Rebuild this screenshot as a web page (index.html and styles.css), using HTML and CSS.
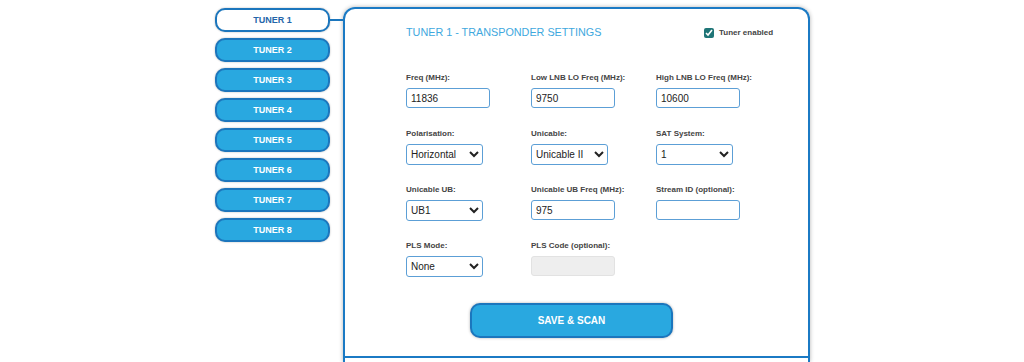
FILE: index.html
```html
<!DOCTYPE html>
<html lang="en">
<head>
<meta charset="utf-8">
<title>Tuner settings</title>
<link rel="stylesheet" href="styles.css">
</head>
<body>
<div class="page">
  <nav class="tuners">
    <button class="tuner active">TUNER 1</button>
    <button class="tuner">TUNER 2</button>
    <button class="tuner">TUNER 3</button>
    <button class="tuner">TUNER 4</button>
    <button class="tuner">TUNER 5</button>
    <button class="tuner">TUNER 6</button>
    <button class="tuner">TUNER 7</button>
    <button class="tuner">TUNER 8</button>
  </nav>
  <main class="panel">
    <section class="settings">
      <div class="head">
        <h2 class="title">TUNER 1 - TRANSPONDER SETTINGS</h2>
        <label class="enable"><input type="checkbox" checked> Tuner enabled</label>
      </div>
      <div class="fields">
        <div class="field"><label>Freq (MHz):</label><input class="text" type="text" value="11836"></div>
        <div class="field"><label>Low LNB LO Freq (MHz):</label><input class="text" type="text" value="9750"></div>
        <div class="field"><label>High LNB LO Freq (MHz):</label><input class="text" type="text" value="10600"></div>

        <div class="field"><label>Polarisation:</label><select class="sel"><option>Horizontal</option><option>Vertical</option></select></div>
        <div class="field"><label>Unicable:</label><select class="sel"><option>Unicable II</option><option>Unicable I</option></select></div>
        <div class="field"><label>SAT System:</label><select class="sel"><option>1</option><option>2</option></select></div>

        <div class="field"><label>Unicable UB:</label><select class="sel"><option>UB1</option><option>UB2</option></select></div>
        <div class="field"><label>Unicable UB Freq (MHz):</label><input class="text" type="text" value="975"></div>
        <div class="field"><label>Stream ID (optional):</label><input class="text" type="text" value=""></div>

        <div class="field"><label>PLS Mode:</label><select class="sel"><option>None</option><option>Root</option><option>Gold</option></select></div>
        <div class="field"><label>PLS Code (optional):</label><input class="text" type="text" value="" disabled></div>
      </div>
      <button class="save">SAVE &amp; SCAN</button>
    </section>
    <section class="next"></section>
  </main>
</div>
</body>
</html>
```

FILE: styles.css
```css
* { box-sizing: border-box; }

body {
  margin: 0;
  background: #fff;
  font-family: "Liberation Sans", Arial, sans-serif;
  color: #444;
}

.page {
  display: flex;
  align-items: flex-start;
  padding: 8px 0 0 215px;
}

.tuners {
  display: flex;
  flex-direction: column;
  gap: 6px;
  width: 115px;
}

.tuner {
  height: 24px;
  margin: 0;
  padding: 0;
  border: 2px solid #1b76bd;
  border-radius: 10px;
  background: #29a8e0;
  color: #fff;
  font-family: "Liberation Sans", Arial, sans-serif;
  font-weight: bold;
  font-size: 9px;
  box-shadow: 0 0 2px rgba(0, 0, 0, 0.3);
}

.tuner.active {
  position: relative;
  background: #fff;
  color: #2566aa;
}

.tuner.active::after {
  content: "";
  position: absolute;
  left: calc(100% + 2px);
  top: 50%;
  margin-top: -1px;
  width: 13px;
  height: 2px;
  background: #1b76bd;
}

.panel {
  margin: -1px 0 0 13px;
  width: 467px;
  border: 2px solid #1b7ac4;
  border-bottom: none;
  border-radius: 12px 12px 0 0;
  box-shadow: 0 0 4px rgba(0, 0, 0, 0.3);
}

.settings {
  padding: 17px 0 18px 61px;
  border-bottom: 2px solid #1b7ac4;
}

.head {
  display: grid;
  grid-template-columns: 298px auto;
  align-items: center;
  height: 13px;
}

.title {
  margin: 0;
  font-size: 10.8px;
  line-height: 13px;
  font-weight: normal;
  color: #3ea8de;
}

.enable {
  display: flex;
  align-items: center;
  gap: 5px;
  font-size: 8px;
  font-weight: bold;
  color: #444;
}

.enable input {
  margin: 0;
  width: 10px;
  height: 10px;
  accent-color: #1f7577;
}

.fields {
  margin-top: 33px;
  display: grid;
  grid-template-columns: repeat(3, 125px);
  grid-auto-rows: 37px;
  row-gap: 19px;
}

.field label {
  display: block;
  padding-top: 1px;
  font-size: 8px;
  line-height: 10px;
  font-weight: bold;
  color: #444;
  margin-bottom: 5px;
}

.text {
  display: block;
  width: 84px;
  height: 20px;
  margin: 0;
  padding: 0 4px;
  border: 1px solid #5c9fd6;
  border-radius: 3px;
  font-family: "Liberation Sans", Arial, sans-serif;
  font-size: 10px;
  color: #222;
  background: #fff;
}

.text:disabled {
  background: #eeeeee;
  border-color: #e2e2e2;
}

.sel {
  display: block;
  width: 77px;
  height: 21px;
  margin: 0;
  border: 1px solid #5c9fd6;
  border-radius: 3px;
  font-family: "Liberation Sans", Arial, sans-serif;
  font-size: 10px;
  color: #222;
  background: #fff;
}

.save {
  display: block;
  margin: 26px 0 0 64px;
  width: 203px;
  height: 35px;
  border: 2px solid #1b76bd;
  border-radius: 10px;
  background: #29a8e0;
  color: #fff;
  font-family: "Liberation Sans", Arial, sans-serif;
  font-weight: bold;
  font-size: 10px;
  box-shadow: 0 0 3px rgba(0, 0, 0, 0.3);
}

.next {
  height: 4px;
}
```
